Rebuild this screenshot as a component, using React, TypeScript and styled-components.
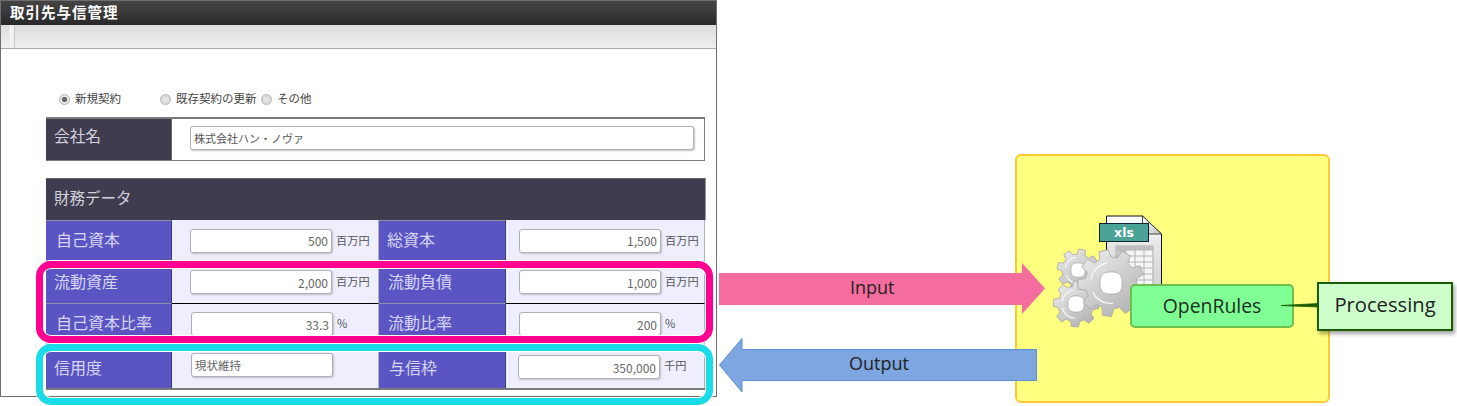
import React from "react";
import styled, { createGlobalStyle } from "styled-components";

const Global = createGlobalStyle`
  html, body { margin: 0; padding: 0; background: #fff; }
  body { font-family: "Noto Sans CJK JP", "Liberation Sans", sans-serif; }
`;

const JP = `"Noto Sans CJK JP", "Noto Sans", sans-serif`;
const LAT = `"Open Sans", "Noto Sans", sans-serif`;

const Page = styled.div`
  display: flex;
  width: 1457px;
  height: 406px;
  overflow: hidden;
  background: #fff;
`;

const Window = styled.section`
  position: relative;
  flex: 0 0 717px;
  height: 397px;
  box-sizing: border-box;
  border: 1px solid #6e6e6e;
  display: flex;
  flex-direction: column;
  background: #fff;
`;

const TitleBar = styled.header`
  height: 24px;
  flex: none;
  box-sizing: border-box;
  display: flex;
  align-items: center;
  padding: 0 0 2px 9px;
  background: linear-gradient(#444 0%, #3a3a3a 45%, #282828 100%);
  color: #fff;
  font: 700 14.5px/1 ${JP};
  letter-spacing: 1px;
`;

const Toolbar = styled.div`
  height: 23px;
  flex: none;
  display: flex;
  background: linear-gradient(#dcdcdc, #efefef);
  border-bottom: 1px solid #a9a9a9;
`;

const ToolbarGrip = styled.span`
  width: 5px;
  margin-left: 8px;
  background: #f0f0f0;
  border-right: 1px solid #c8c8c8;
`;

const Body = styled.div`
  padding: 41px 0 0 45px;
  width: 659px;
`;

const RadioRow = styled.div`
  height: 18px;
  padding-left: 13px;
  margin-bottom: 9px;
  display: flex;
  align-items: center;
`;

const RadioItem = styled.label<{ $width: number }>`
  width: ${(p) => p.$width}px;
  display: flex;
  align-items: center;
  gap: 5px;
  font: 400 11.5px/1 ${JP};
  color: #444;
  white-space: nowrap;
`;

const RadioDot = styled.span<{ $on?: boolean }>`
  width: 11px;
  height: 11px;
  border-radius: 50%;
  box-sizing: border-box;
  border: 1px solid #b4b4b4;
  background: ${(p) =>
    p.$on ? "radial-gradient(circle, #666 0 2.2px, #e6e6e6 3px)" : "radial-gradient(circle, #e8e8e8, #d0d0d0)"};
`;

const CompanyTable = styled.div`
  display: flex;
  height: 44px;
  box-sizing: border-box;
  width: 659px;
  border-top: 2px solid #7a7a7a;
  border-bottom: 1px solid #7a7a7a;
  border-right: 1px solid #7a7a7a;
  margin-bottom: 17px;
`;

const CompanyLabel = styled.div`
  width: 126px;
  flex: none;
  box-sizing: border-box;
  padding: 0 0 8px 8px;
  display: flex;
  align-items: center;
  background: #403c4f;
  border-right: 1px solid #666;
  color: #d2d2dc;
  font: 400 15.7px/1 ${JP};
`;

const CompanyValue = styled.div`
  flex: 1;
  padding: 7px 10px 0 18px;
`;

const WideInput = styled.input`
  display: block;
  width: 100%;
  height: 24px;
  box-sizing: border-box;
  padding: 0 3px;
  border: 1px solid #b0b0b0;
  border-radius: 3px;
  box-shadow: 1px 1px 2px #c4c4c4;
  background: #fff;
  color: #555;
  font: 400 11px/1 ${JP};
  outline: none;
`;

const SectionHead = styled.div`
  height: 42px;
  box-sizing: border-box;
  width: 660px;
  display: flex;
  align-items: center;
  padding: 0 0 4px 8px;
  background: #403c4f;
  border-top: 1px solid #666;
  border-right: 1px solid #999;
  color: #d2d2dc;
  font: 400 15.5px/1 ${JP};
`;

const Row = styled.div<{ $h: number; $thick?: boolean }>`
  display: grid;
  grid-template-columns: 126px 207px 127px 199px;
  width: 659px;
  height: ${(p) => p.$h}px;
  border-bottom: ${(p) => (p.$thick ? "2px solid #7a7a7a" : "0")};
`;

const Label = styled.div<{ $pad?: number; $low?: boolean }>`
  display: flex;
  align-items: center;
  box-sizing: border-box;
  padding: 0 0 ${(p) => (p.$low ? "0" : "4px")} ${(p) => p.$pad ?? 8}px;
  background: #5b55c3;
  border-top: 1px solid #8f8fa6;
  border-right: 1px solid #3a3a78;
  color: #d6d6f0;
  font: 400 16px/1 ${JP};
  white-space: nowrap;
`;

const Value = styled.div<{ $pad: number; $line?: boolean }>`
  display: flex;
  align-items: center;
  gap: 4px;
  box-sizing: border-box;
  padding-left: ${(p) => p.$pad}px;
  background: #eeeefd;
  border-top: ${(p) => (p.$line ? "1px solid #000" : "0")};
  border-right: 1px solid #b0b0c0;
`;

const NumInput = styled.input<{ $left?: boolean; $nudge?: number }>`
  width: 142px;
  height: 24px;
  box-sizing: border-box;
  padding: 0 3px;
  margin-top: ${(p) => p.$nudge ?? 0}px;
  border: 1px solid #b0b0b8;
  border-radius: 3px;
  box-shadow: 1px 1px 2px #c0c0c8;
  background: #fff;
  color: #666;
  text-align: ${(p) => (p.$left ? "left" : "right")};
  font: 400 ${(p) => (p.$left ? "11.5px" : "12px")}/1 ${JP};
  outline: none;
`;

const Unit = styled.span`
  font: 400 11.2px/1 ${JP};
  color: #555;
  white-space: nowrap;
`;

const Highlight = styled.div<{ $color: string; $top: number; $height: number }>`
  position: absolute;
  left: 35px;
  top: ${(p) => p.$top}px;
  width: 677px;
  height: ${(p) => p.$height}px;
  box-sizing: border-box;
  border: 7.5px solid ${(p) => p.$color};
  border-radius: 15px;
  box-shadow: 0 0 0 1px #fff, inset 0 0 0 1px #fff;
  pointer-events: none;
`;

const Diagram = styled.div`
  position: relative;
  flex: 1;
  height: 406px;
`;

const ArrowSvg = styled.svg`
  position: absolute;
  left: 0;
  top: 0;
  width: 740px;
  height: 406px;
`;

const ArrowText = styled.span<{ $x: number; $y: number }>`
  position: absolute;
  left: ${(p) => p.$x}px;
  top: ${(p) => p.$y}px;
  font: 400 18px/24px ${LAT};
  color: #222;
`;

const EngineBox = styled.div`
  position: absolute;
  left: 298px;
  top: 154px;
  width: 315px;
  height: 249px;
  box-sizing: border-box;
  background: #ffff80;
  border: 2px solid #ffc936;
  border-radius: 6px;
`;

const IconSvg = styled.svg`
  position: absolute;
  left: 323px;
  top: 205px;
  width: 130px;
  height: 130px;
`;

const RulesBox = styled.div`
  position: absolute;
  left: 413px;
  top: 284px;
  width: 164px;
  height: 44px;
  box-sizing: border-box;
  display: flex;
  align-items: center;
  justify-content: center;
  background: #80ff94;
  border: 2px solid #70c050;
  border-radius: 5px;
  color: #1e2e22;
  font: 400 19.4px/1 ${LAT};
`;

const CalloutTail = styled.svg`
  position: absolute;
  left: 560px;
  top: 295px;
  width: 44px;
  height: 20px;
`;

const Callout = styled.div`
  position: absolute;
  left: 600px;
  top: 282px;
  width: 136px;
  height: 49px;
  box-sizing: border-box;
  display: flex;
  align-items: center;
  justify-content: center;
  padding-bottom: 5px;
  background: #ccffcc;
  border: 2px solid #1a5c00;
  box-shadow: 2px 3px 4px rgba(0, 0, 0, 0.35);
  color: #222;
  font: 400 20.2px/1 ${LAT};
`;

function gearPath(cx: number, cy: number, R: number, r: number, teeth: number, rot = 0) {
  const pts: string[] = [];
  const step = (Math.PI * 2) / teeth;
  for (let i = 0; i < teeth; i++) {
    const a = rot + i * step;
    const seq: [number, number][] = [
      [r, a - step * 0.33],
      [R, a - step * 0.2],
      [R, a + step * 0.2],
      [r, a + step * 0.33],
    ];
    seq.forEach(([rad, ang]) => {
      pts.push(`${(cx + rad * Math.cos(ang)).toFixed(2)} ${(cy + rad * Math.sin(ang)).toFixed(2)}`);
    });
  }
  return `M${pts.join("L")}Z`;
}

function holePath(cx: number, cy: number, r: number) {
  const k = r * 0.75;
  return `M${cx - r} ${cy}C${cx - r} ${cy - k} ${cx - k} ${cy - r} ${cx} ${cy - r}C${cx + k} ${cy - r} ${cx + r} ${cy - k} ${cx + r} ${cy}C${cx + r} ${cy + k} ${cx + k} ${cy + r} ${cx} ${cy + r}C${cx - k} ${cy + r} ${cx - r} ${cy + k} ${cx - r} ${cy}Z`;
}

const Gear = ({ cx, cy, R, r, hole, teeth, rot }: { cx: number; cy: number; R: number; r: number; hole: number; teeth: number; rot: number }) => (
  <g>
    <path
      d={`${gearPath(cx, cy, R, r, teeth, rot)}${holePath(cx, cy, hole)}`}
      fill="url(#g1)"
      fillRule="evenodd"
      stroke="#a4a4a4"
      strokeWidth="0.8"
      strokeLinejoin="round"
    />
    <circle cx={cx} cy={cy} r={hole + (R - hole) * 0.42} fill="none" stroke="#f6f6f6" strokeWidth="1.4" strokeDasharray={`${hole * 2.2} ${hole * 6}`} transform={`rotate(190 ${cx} ${cy})`} />
    <path d={holePath(cx, cy, hole)} fill="#fff" stroke="#b0b0b0" strokeWidth="0.6" />
  </g>
);

const EngineIcon = () => (
  <IconSvg viewBox="1040 205 130 130" aria-hidden>
    <defs>
      <linearGradient id="g1" x1="0" y1="0" x2="0.7" y2="1">
        <stop offset="0" stopColor="#f0f0f0" />
        <stop offset="1" stopColor="#b4b4b4" />
      </linearGradient>
      <linearGradient id="paper" x1="0" y1="0" x2="0" y2="1">
        <stop offset="0" stopColor="#fdfdfd" />
        <stop offset="0.35" stopColor="#e6e6e6" />
        <stop offset="1" stopColor="#cfcfcf" />
      </linearGradient>
      <linearGradient id="fold" x1="0" y1="0" x2="1" y2="1">
        <stop offset="0" stopColor="#ffffff" />
        <stop offset="1" stopColor="#c4c4c4" />
      </linearGradient>
    </defs>
    <path d="M1106.5 216H1142.5L1161.5 234V300H1106.5Z" fill="url(#paper)" stroke="#111" strokeWidth="1" />
    <path d="M1142.5 216V234H1161.5Z" fill="url(#fold)" stroke="#222" strokeWidth="0.8" />
    <rect x="1099.5" y="223.5" width="49" height="18" fill="#4ca296" stroke="#123" strokeWidth="1" />
    <text x="1124" y="237" textAnchor="middle" fill="#fff" fontFamily="'DejaVu Sans', sans-serif" fontWeight="700" fontSize="12.5">xls</text>
    <rect x="1116" y="246" width="37" height="42" fill="#f6f6f6" stroke="#aaa" strokeWidth="1" />
    <rect x="1116" y="246" width="10" height="42" fill="#c8c8c8" />
    <rect x="1116" y="246" width="37" height="4" fill="#c0c0c0" />
    {[1126, 1135, 1144].map((x) => (
      <line key={x} x1={x} x2={x} y1="246" y2="288" stroke="#b4b4b4" />
    ))}
    {[250, 256, 262, 268, 274, 280].map((y) => (
      <line key={y} x1="1116" x2="1153" y1={y} y2={y} stroke="#b4b4b4" />
    ))}
    <Gear cx={1078} cy={270} R={21} r={16} hole={7} teeth={8} rot={0.2} />
    <Gear cx={1076} cy={304} R={23} r={18} hole={8} teeth={8} rot={0.05} />
    <Gear cx={1111} cy={283} R={33.5} r={26} hole={11} teeth={9} rot={0.3} />
  </IconSvg>
);

export default function App() {
  return (
    <Page>
      <Global />
      <Window>
        <TitleBar>取引先与信管理</TitleBar>
        <Toolbar>
          <ToolbarGrip />
        </Toolbar>
        <Body>
          <RadioRow>
            <RadioItem $width={101}><RadioDot $on />新規契約</RadioItem>
            <RadioItem $width={101}><RadioDot />既存契約の更新</RadioItem>
            <RadioItem $width={60}><RadioDot />その他</RadioItem>
          </RadioRow>
          <CompanyTable>
            <CompanyLabel>会社名</CompanyLabel>
            <CompanyValue>
              <WideInput readOnly value="株式会社ハン・ノヴァ" />
            </CompanyValue>
          </CompanyTable>
          <SectionHead>財務データ</SectionHead>
          <Row $h={41}>
            <Label $pad={10}>自己資本</Label>
            <Value $pad={18}>
              <NumInput readOnly value="500" />
              <Unit>百万円</Unit>
            </Value>
            <Label>総資本</Label>
            <Value $pad={13}>
              <NumInput readOnly value="1,500" />
              <Unit>百万円</Unit>
            </Value>
          </Row>
          <Row $h={42}>
            <Label>流動資産</Label>
            <Value $pad={18}>
              <NumInput readOnly value="2,000" />
              <Unit>百万円</Unit>
            </Value>
            <Label $pad={9}>流動負債</Label>
            <Value $pad={13}>
              <NumInput readOnly value="1,000" />
              <Unit>百万円</Unit>
            </Value>
          </Row>
          <Row $h={41}>
            <Label $pad={10}>自己資本比率</Label>
            <Value $pad={19} $line>
              <NumInput readOnly value="33.3" />
              <Unit>%</Unit>
            </Value>
            <Label $pad={9}>流動比率</Label>
            <Value $pad={13} $line>
              <NumInput readOnly value="200" />
              <Unit>%</Unit>
            </Value>
          </Row>
          <Row $h={44} $thick>
            <Label $low>信用度</Label>
            <Value $pad={19}>
              <NumInput readOnly $left $nudge={-2} value="現状維持" />
            </Value>
            <Label $pad={10} $low>与信枠</Label>
            <Value $pad={12}>
              <NumInput readOnly $nudge={2} value="350,000" />
              <Unit>千円</Unit>
            </Value>
          </Row>
        </Body>
        <Highlight $color="#ff0090" $top={260} $height={82} />
        <Highlight $color="#1adbe8" $top={343} $height={61} />
      </Window>
      <Diagram>
        <EngineBox />
        <ArrowSvg viewBox="717 0 740 406" aria-hidden>
          <path d="M719 273H1022V263L1045 288.5L1022 314V305H719Z" fill="#f56c9e" />
          <path d="M719.5 365L742 338.5V349.5H1036.5V380.5H742V392Z" fill="#7ea6e0" stroke="#5b8fd8" strokeWidth="1" />
        </ArrowSvg>
        <ArrowText $x={133} $y={275}>Input</ArrowText>
        <ArrowText $x={132} $y={351}>Output</ArrowText>
        <EngineIcon />
        <RulesBox>OpenRules</RulesBox>
        <CalloutTail viewBox="0 0 44 20" aria-hidden>
          <path d="M4 10.5L42 8.5V12Z" fill="#1a5c00" stroke="#1a5c00" strokeWidth="0.8" />
        </CalloutTail>
        <Callout>Processing</Callout>
      </Diagram>
    </Page>
  );
}
